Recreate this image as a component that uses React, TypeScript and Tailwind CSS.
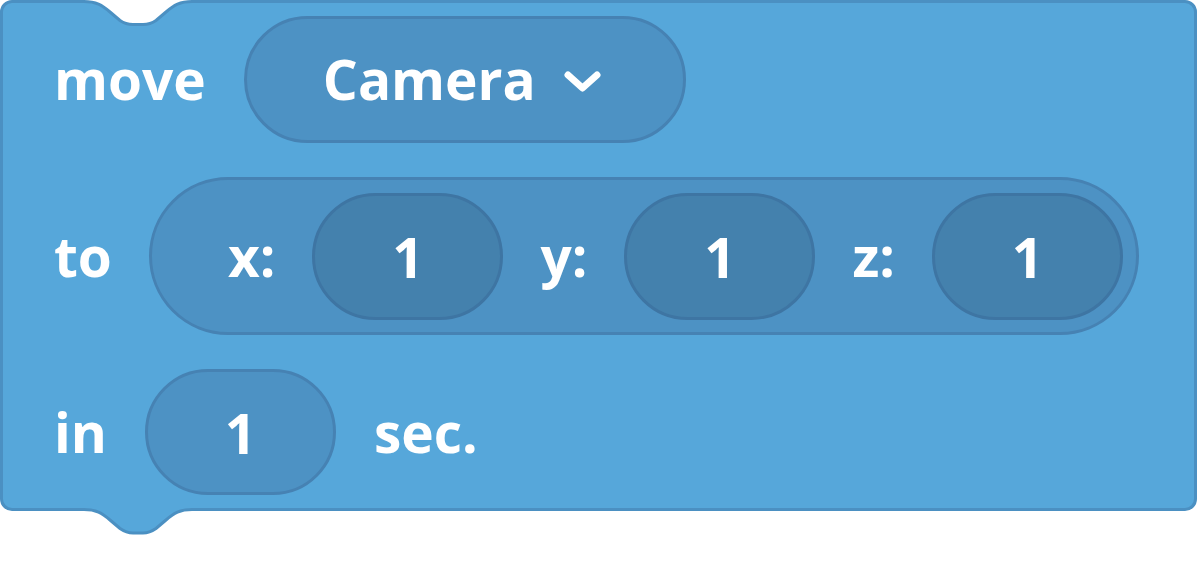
import React from "react";

const font = { fontFamily: "'Open Sans', 'Noto Sans', sans-serif" };

function NumPill({ value, dark }: { value: string; dark?: boolean }) {
  return (
    <div
      className={
        dark
          ? "flex h-[127px] w-[191px] shrink-0 items-center justify-center rounded-full border-[3px] border-[#3e75a3] bg-[#4481ad]"
          : "flex h-[126px] w-[191px] shrink-0 items-center justify-center rounded-full border-[3px] border-[#4682b3] bg-[#4d92c4]"
      }
    >
      <span className="text-[55px] font-bold leading-none text-white">{value}</span>
    </div>
  );
}

export default function App() {
  return (
    <div className="min-h-[568px] w-[1198px] bg-white" style={font}>
      <div className="relative w-[1197px]">
        <div className="flex h-[511px] flex-col gap-[34px] rounded-[12px] border-[3px] border-[#4b90c2] bg-[#56a7da] pb-[13px] pl-[51px] pt-[13px] text-white">
          {/* row 1 */}
          <div className="flex items-center gap-[38px]">
            <span className="text-[55px] font-bold">move</span>
            <div className="flex h-[127px] w-[442px] items-center gap-[28px] rounded-full border-[3px] border-[#4682b3] bg-[#4d92c4] pl-[76px]">
              <span className="text-[55px] font-bold">Camera</span>
              <svg width="37" height="24" viewBox="0 0 37 24" className="mt-[4px]">
                <polyline
                  points="4,5 18.5,18 33,5"
                  fill="none"
                  stroke="white"
                  strokeWidth="7"
                  strokeLinecap="round"
                  strokeLinejoin="round"
                />
              </svg>
            </div>
          </div>
          {/* row 2 */}
          <div className="flex items-center gap-[37px]">
            <span className="text-[55px] font-bold">to</span>
            <div className="flex h-[158px] items-center gap-[37px] rounded-full border-[3px] border-[#4682b3] bg-[#4d92c4] pl-[76px] pr-[13px]">
              <span className="text-[55px] font-bold">x:</span>
              <NumPill value="1" dark />
              <span className="text-[55px] font-bold">y:</span>
              <NumPill value="1" dark />
              <span className="text-[55px] font-bold">z:</span>
              <NumPill value="1" dark />
            </div>
          </div>
          {/* row 3 */}
          <div className="flex items-center gap-[38px]">
            <span className="text-[55px] font-bold">in</span>
            <NumPill value="1" />
            <span className="text-[55px] font-bold">sec.</span>
          </div>
        </div>
        {/* top notch */}
        <svg className="absolute left-0 top-0" width="220" height="30" viewBox="0 0 220 30">
          <path
            d="M84 -2 L84 1.5 C96 1.5 102 5 110 12 L120 20.5 C125 24 128 24.5 133 24.5 H143 C148 24.5 151 24 156 20.5 L166 12 C174 5 180 1.5 192 1.5 L192 -2 Z"
            fill="white"
          />
          <path
            d="M84 1.5 C96 1.5 102 5 110 12 L120 20.5 C125 24 128 24.5 133 24.5 H143 C148 24.5 151 24 156 20.5 L166 12 C174 5 180 1.5 192 1.5"
            fill="none"
            stroke="#4b90c2"
            strokeWidth="3"
          />
        </svg>
        {/* bottom tab */}
        <svg className="absolute left-0 top-[500px]" width="220" height="40" viewBox="0 500 220 40">
          <path
            d="M84 505 L84 509.5 C96 509.5 102 513 110 520 L120 528.5 C125 532 128 533 133 533 H143 C148 533 151 532 156 528.5 L166 520 C174 513 180 509.5 192 509.5 L192 505 Z"
            fill="#56a7da"
          />
          <path
            d="M84 509.5 C96 509.5 102 513 110 520 L120 528.5 C125 532 128 533 133 533 H143 C148 533 151 532 156 528.5 L166 520 C174 513 180 509.5 192 509.5"
            fill="none"
            stroke="#4b90c2"
            strokeWidth="3"
          />
        </svg>
      </div>
    </div>
  );
}
